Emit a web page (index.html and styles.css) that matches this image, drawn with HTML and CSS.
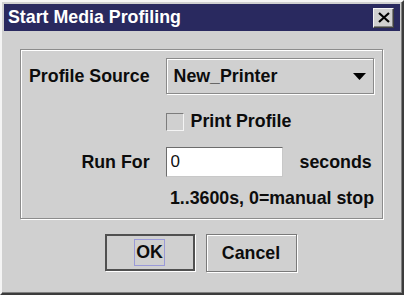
FILE: index.html
```html
<!DOCTYPE html>
<html lang="en">
<head>
    <meta charset="UTF-8">
    <title>Start Media Profiling</title>
    <link rel="stylesheet" href="styles.css">
</head>
<body>
    <div class="window">
        <div class="titlebar">
            <span class="title">Start Media Profiling</span>
            <button class="close">
                <svg width="12" height="11" viewBox="0 0 12 11">
                    <path d="M1 1 L11 10 M11 1 L1 10" stroke="#000" stroke-width="2.2" fill="none"/>
                </svg>
            </button>
        </div>
        <div class="content">
            <div class="group">
                <div class="form">
                    <label class="lbl">Profile Source</label>
                    <div class="combo">
                        <span>New_Printer</span>
                        <svg width="13" height="7" viewBox="0 0 13 7"><path d="M0 0 H13 L6.5 7 Z" fill="#000"/></svg>
                    </div>
                    <span></span>
                    <label class="check"><span class="box"></span>Print Profile</label>
                    <label class="lbl">Run For</label>
                    <div class="run">
                        <input type="text" value="0">
                        <span>seconds</span>
                    </div>
                    <span></span>
                    <div class="hint">1..3600s, 0=manual stop</div>
                </div>
            </div>
            <div class="buttons">
                <button class="btn default"><span class="focus">OK</span></button>
                <button class="btn">Cancel</button>
            </div>
        </div>
    </div>
</body>
</html>
```

FILE: styles.css
```css
html, body {
    margin: 0;
    padding: 0;
    background-color: #d0d0d0;
}
body {
    font-family: "Liberation Sans", Arial, sans-serif;
    font-size: 17.8px;
    font-weight: bold;
    color: #0c0c0c;
}
.window {
    box-sizing: border-box;
    width: 404px;
    height: 295px;
    padding: 2px;
    border: 2px solid;
    border-color: #f4f4f4 #3c3c3c #3c3c3c #f4f4f4;
    box-shadow: inset -1px -1px 0 #808080;
    display: flex;
    flex-direction: column;
}
.titlebar {
    height: 27px;
    background-color: #29295f;
    display: flex;
    align-items: center;
    justify-content: space-between;
    padding: 0 6px 0 4px;
}
.title {
    color: #fff;
}
.close {
    width: 21px;
    height: 20px;
    padding: 0;
    margin: 0;
    background-color: #d0d0d0;
    border: 1px solid;
    border-color: #f4f4f4 #404040 #404040 #f4f4f4;
    box-shadow: inset -1px -1px 0 #808080;
    display: flex;
    align-items: center;
    justify-content: center;
}
.content {
    flex: 1;
    padding: 18px 17px 0 16px;
}
.group {
    height: 170px;
    box-sizing: border-box;
    border: 1px solid #8c8c8c;
    box-shadow: inset 1px 1px 0 #fff, 1px 1px 0 #fff;
    padding: 8px 8px 0 8px;
}
.form {
    display: grid;
    grid-template-columns: auto 1fr;
    grid-template-rows: 36px 53px 30px 31px;
    column-gap: 16px;
    align-items: center;
}
.lbl {
    justify-self: end;
}
.combo {
    box-sizing: border-box;
    height: 36px;
    border: 1px solid #8a8a8a;
    box-shadow: 1px 1px 0 #fff, inset 1px 1px 0 #fff;
    display: flex;
    align-items: center;
    justify-content: space-between;
    padding: 0 7px 0 7px;
}
.check {
    display: flex;
    align-items: center;
    gap: 7px;
    align-self: end;
    margin-bottom: 15px;
}
.box {
    width: 16px;
    height: 16px;
    border: 1px solid;
    border-color: #7c7c7c #f4f4f4 #f4f4f4 #7c7c7c;
    background-color: #d0d0d0;
}
.run {
    display: flex;
    align-items: center;
    gap: 17px;
}
.run input {
    box-sizing: border-box;
    width: 117px;
    height: 30px;
    margin: 0;
    border: 1px solid;
    border-color: #6c6c6c #c8c8c8 #c8c8c8 #6c6c6c;
    background-color: #fff;
    font-family: "Liberation Sans", Arial, sans-serif;
    font-size: 17px;
    padding: 0 4px;
    color: #111;
}
.hint {
    justify-self: end;
    align-self: end;
    line-height: 20px;
}
.buttons {
    display: flex;
    justify-content: center;
    gap: 11px;
    margin-top: 15px;
    padding-right: 2px;
}
.btn {
    box-sizing: border-box;
    width: 91px;
    height: 38px;
    margin: 0;
    font-family: "Liberation Sans", Arial, sans-serif;
    font-size: 17.8px;
    font-weight: bold;
    color: #0c0c0c;
    background-color: #d0d0d0;
    border: 1px solid #7a7a7a;
    box-shadow: 1px 1px 0 #fff, inset 1px 1px 0 #fff;
    padding: 0;
}
.btn.default {
    width: 90px;
    height: 37px;
    border: 2px solid #505050;
    box-shadow: 1px 1px 0 #fff;
}
.focus {
    display: inline-block;
    border: 1px solid #9a9ad8;
    padding: 3px 1px;
    line-height: 19px;
}
```
